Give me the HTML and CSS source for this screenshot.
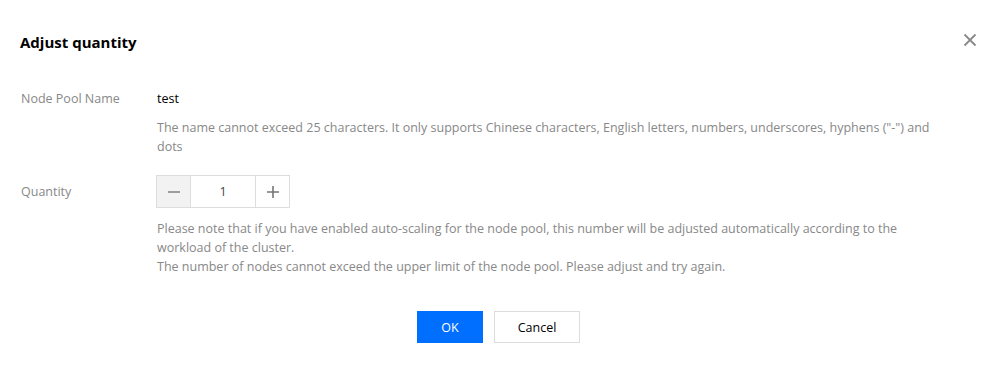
FILE: index.html
```html
<!DOCTYPE html>
<html lang="en">
<head>
    <meta charset="UTF-8">
    <title>Adjust quantity</title>
    <link rel="stylesheet" href="styles.css">
</head>
<body>
    <div class="dialog">
        <div class="dialog-header">
            <h3 class="dialog-title">Adjust quantity</h3>
            <button class="close-btn" aria-label="Close">
                <svg width="14" height="14" viewBox="0 0 14 14">
                    <path d="M1.5 1.5 L12.5 12.5 M12.5 1.5 L1.5 12.5" stroke="#888" stroke-width="1.8" fill="none"/>
                </svg>
            </button>
        </div>

        <div class="form">
            <div class="form-item">
                <div class="form-label">Node Pool Name</div>
                <div class="form-control">
                    <div class="form-text">test</div>
                    <p class="form-help">The name cannot exceed 25 characters. It only supports Chinese characters, English letters, numbers, underscores, hyphens ("-") and dots</p>
                </div>
            </div>

            <div class="form-item item-quantity">
                <div class="form-label label-control">Quantity</div>
                <div class="form-control">
                    <div class="stepper">
                        <button class="step-btn step-minus">
                            <svg width="12" height="12" viewBox="0 0 12 12"><path d="M0 6 H12" stroke="#888" stroke-width="1.6"/></svg>
                        </button>
                        <input class="step-input" type="text" value="1">
                        <button class="step-btn step-plus">
                            <svg width="12" height="12" viewBox="0 0 12 12"><path d="M0 6 H12 M6 0 V12" stroke="#777" stroke-width="1.6"/></svg>
                        </button>
                    </div>
                    <p class="form-help help-quantity">Please note that if you have enabled auto-scaling for the node pool, this number will be adjusted automatically according to the workload of the cluster.<br>The number of nodes cannot exceed the upper limit of the node pool. Please adjust and try again.</p>
                </div>
            </div>
        </div>

        <div class="dialog-footer">
            <button class="btn btn-primary">OK</button>
            <button class="btn">Cancel</button>
        </div>
    </div>
</body>
</html>
```

FILE: styles.css
```css
body {
    margin: 0;
    font-family: "Open Sans", "Liberation Sans", Arial, sans-serif;
    font-size: 12.5px;
    color: #000;
    background-color: #fff;
}
.dialog {
    width: 985px;
    height: 365px;
    box-sizing: border-box;
    padding: 32px 20px 0 20px;
}
.dialog-header {
    display: flex;
    justify-content: space-between;
    align-items: center;
    height: 20px;
}
.dialog-title {
    margin: 0;
    font-size: 15px;
    font-weight: bold;
    line-height: 20px;
    color: #000;
}
.close-btn {
    border: none;
    background: none;
    padding: 0;
    width: 14px;
    height: 14px;
    margin-right: -12px;
    margin-top: -4px;
    cursor: pointer;
}
.form {
    margin-top: 37px;
}
.form-item {
    display: flex;
}
.form-label {
    width: 136px;
    flex-shrink: 0;
    padding-left: 1px;
    line-height: 20px;
    color: #888;
}
.form-control {
    flex: 1;
    padding-right: 20px;
}
.form-text {
    line-height: 20px;
    color: #000;
}
.form-help {
    margin: 9px 0 0 0;
    line-height: 19px;
    color: #888;
}
.item-quantity {
    margin-top: 19px;
}
.label-control {
    line-height: 33px;
}
.stepper {
    display: flex;
    width: 134px;
    height: 33px;
    box-sizing: border-box;
    border: 1px solid #ddd;
    margin-left: -1px;
}
.step-btn {
    width: 34px;
    height: 31px;
    border: none;
    background: #fff;
    padding: 0;
    display: flex;
    align-items: center;
    justify-content: center;
}
.step-minus {
    background: #f2f2f2;
    border-right: 1px solid #ddd;
}
.step-plus {
    border-left: 1px solid #ddd;
}
.step-input {
    width: 64px;
    border: none;
    padding: 0;
    text-align: center;
    font-family: inherit;
    font-size: 12.5px;
    color: #444;
    outline: none;
}
.help-quantity {
    margin-top: 11px;
}
.dialog-footer {
    display: flex;
    justify-content: center;
    gap: 11px;
    margin-top: 35px;
    padding-left: 12px;
}
.btn {
    height: 32px;
    min-width: 86px;
    padding: 0 20px;
    box-sizing: border-box;
    border: 1px solid #ddd;
    background: #fff;
    font-family: inherit;
    font-size: 12.5px;
    color: #000;
    cursor: pointer;
}
.btn-primary {
    min-width: 66px;
    background: #006eff;
    border-color: #006eff;
    color: #fff;
}
```
